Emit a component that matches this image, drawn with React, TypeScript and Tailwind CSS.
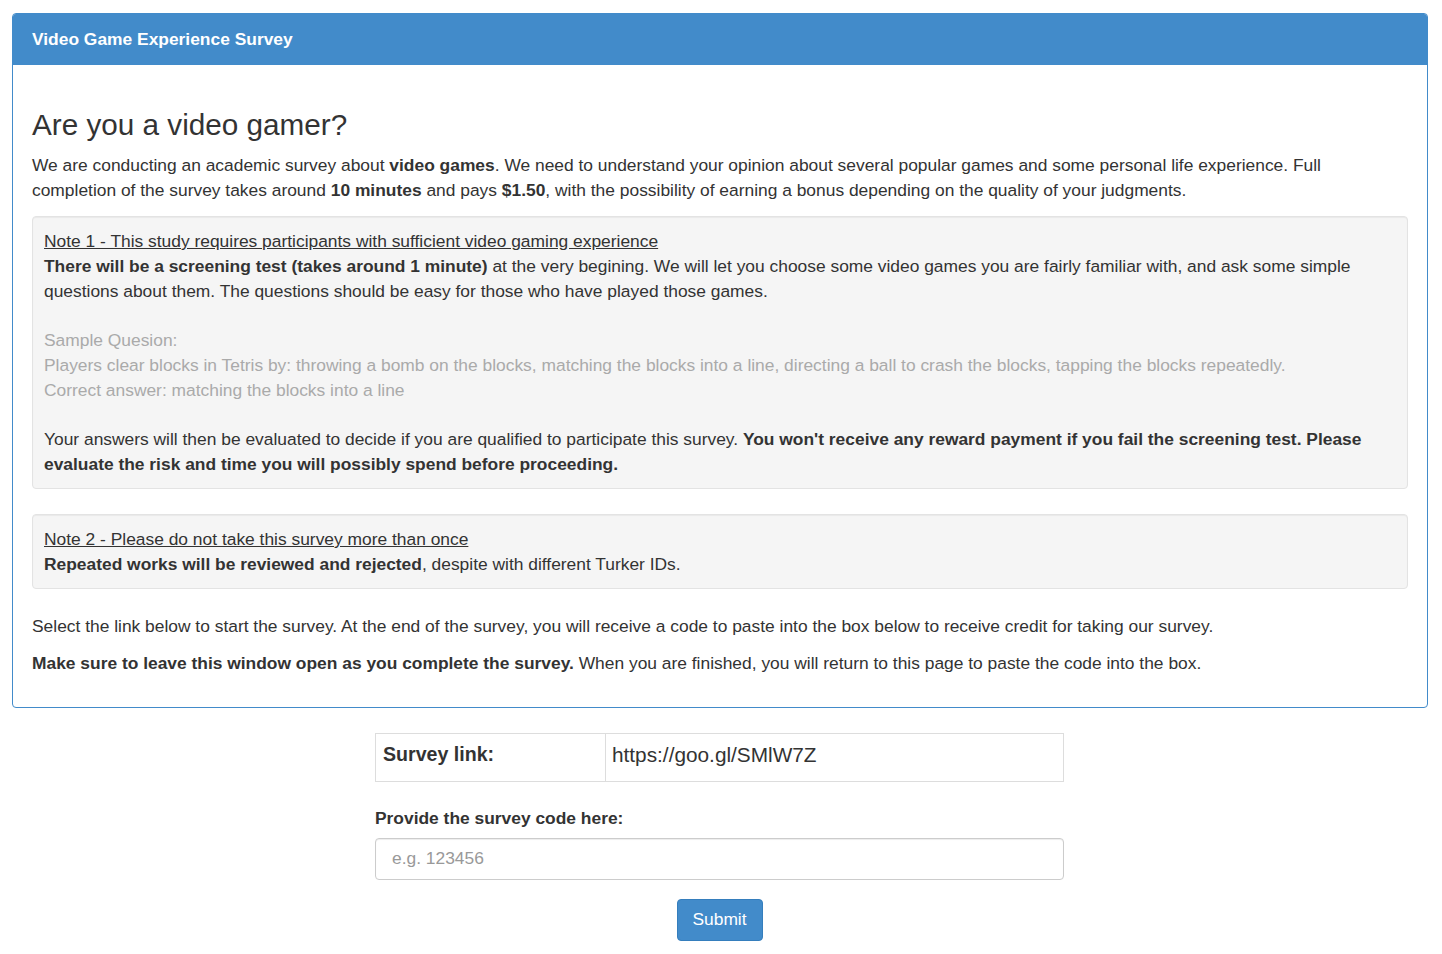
export default function App() {
  return (
    <div className="min-h-[954px] bg-white pt-[13px] pb-[13px] text-[#333] font-['Liberation_Sans',Arial,sans-serif] text-[17.4px] leading-[25px]">
      <div className="ml-[12px] w-[1416px] rounded-[4px] border border-[#428bca] bg-white">
        <div className="flex h-[51px] items-center rounded-t-[3px] bg-[#428bca] px-[19px]">
          <h1 className="text-[17.4px] font-bold text-white">Video Game Experience Survey</h1>
        </div>
        <div className="px-[19px] pt-[19px] pb-[19px]">
          <h2 className="mt-[24px] mb-[12px] text-[29.7px] leading-[33px] font-normal">Are you a video gamer?</h2>
          <p className="mb-[13px]">
            We are conducting an academic survey about <b>video games</b>. We need to understand your opinion about several popular games and some personal life experience. Full completion of the survey takes around <b>10 minutes</b> and pays <b>$1.50</b>, with the possibility of earning a bonus depending on the quality of your judgments.
          </p>
          <div className="mb-[25px] rounded-[4px] border border-[#e3e3e3] bg-[#f5f5f5] px-[11px] pt-[12px] pb-[11px] leading-[24.8px] shadow-[inset_0_1px_1px_rgba(0,0,0,0.05)]">
            <div className="underline">Note 1 - This study requires participants with sufficient video gaming experience</div>
            <div>
              <b>There will be a screening test (takes around 1 minute)</b> at the very begining. We will let you choose some video games you are fairly familiar with, and ask some simple questions about them. The questions should be easy for those who have played those games.
            </div>
            <div className="h-[24.8px]" />
            <div className="text-[#aaa]">
              <div>Sample Quesion:</div>
              <div>Players clear blocks in Tetris by: throwing a bomb on the blocks, matching the blocks into a line, directing a ball to crash the blocks, tapping the blocks repeatedly.</div>
              <div>Correct answer: matching the blocks into a line</div>
            </div>
            <div className="h-[24.8px]" />
            <div>
              Your answers will then be evaluated to decide if you are qualified to participate this survey. <b>You won't receive any reward payment if you fail the screening test. Please evaluate the risk and time you will possibly spend before proceeding.</b>
            </div>
          </div>
          <div className="mb-[25px] rounded-[4px] border border-[#e3e3e3] bg-[#f5f5f5] px-[11px] pt-[12px] pb-[11px] leading-[24.8px] shadow-[inset_0_1px_1px_rgba(0,0,0,0.05)]">
            <div className="underline">Note 2 - Please do not take this survey more than once</div>
            <div>
              <b>Repeated works will be reviewed and rejected</b>, despite with different Turker IDs.
            </div>
          </div>
          <p className="mb-[12px]">
            Select the link below to start the survey. At the end of the survey, you will receive a code to paste into the box below to receive credit for taking our survey.
          </p>
          <p className="mb-[12px]">
            <b>Make sure to leave this window open as you complete the survey.</b> When you are finished, you will return to this page to paste the code into the box.
          </p>
        </div>
      </div>

      <div className="ml-[375px] mt-[25px] w-[689px]">
        <div className="flex h-[49px] border border-[#ddd]">
          <div className="flex w-[230px] items-center border-r border-[#ddd] px-[7px] pb-[6px] text-[19.6px] font-bold">Survey link:</div>
          <div className="flex flex-1 items-center px-[6px] pb-[6px] text-[20.8px]">https://goo.gl/SMlW7Z</div>
        </div>
        <label className="mt-[24px] mb-[7px] block font-bold">Provide the survey code here:</label>
        <input
          placeholder="e.g. 123456"
          className="h-[42px] w-full rounded-[4px] border border-[#ccc] px-[16px] text-[17.4px] text-[#555] shadow-[inset_0_1px_1px_rgba(0,0,0,0.075)] outline-none placeholder:text-[#999]"
        />
        <div className="mt-[19px] flex justify-center">
          <button className="h-[42px] w-[86px] rounded-[4px] border border-[#357ebd] bg-[#428bca] text-[17.4px] text-white">Submit</button>
        </div>
      </div>
    </div>
  )
}
